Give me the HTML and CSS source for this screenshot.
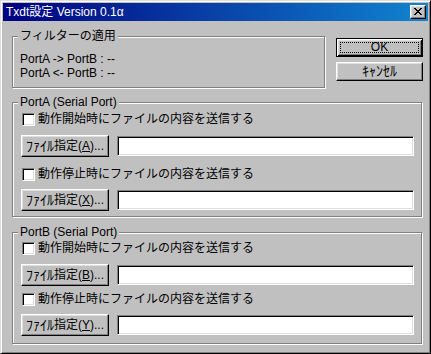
FILE: index.html
```html
<html>

<head>
    <meta charset="UTF-8" />
    <title>Txdt設定 Version 0.1α</title>
    <link rel="stylesheet" href="styles.css">
</head>

<body>
    <div class="window">
        <div class="titlebar">
            <span class="title">Txdt設定 Version 0.1α</span>
            <span class="close">
                <svg width="8" height="7" viewBox="0 0 8 7" shape-rendering="crispEdges">
                    <path fill="#000" d="M0 0h2v1H0zM6 0h2v1H6zM1 1h2v1H1zM5 1h2v1H5zM2 2h4v1H2zM3 3h2v1H3zM2 4h4v1H2zM1 5h2v1H1zM5 5h2v1H5zM0 6h2v1H0zM6 6h2v1H6z" />
                </svg>
            </span>
        </div>
        <div class="client">
            <div class="toprow">
                <div class="group filter">
                    <span class="legend">フィルターの適用</span>
                    <div class="status">
                        <div>PortA -&gt; PortB : --</div>
                        <div>PortA &lt;- PortB : --</div>
                    </div>
                </div>
                <div class="actions">
                    <div class="btn default"><span class="focus">OK</span></div>
                    <div class="btn"><span class="hw">ｷｬﾝｾﾙ</span></div>
                </div>
            </div>

            <!-- PortA -->
            <div class="group port porta">
                <span class="legend">PortA (Serial Port)</span>
                <div class="check first"><span class="box"></span>動作開始時にファイルの内容を送信する</div>
                <div class="filerow"><div class="btn file"><span class="hw">ﾌｧｲﾙ</span>指定(<u>A</u>)...</div><div class="edit"></div></div>
                <div class="check second"><span class="box"></span>動作停止時にファイルの内容を送信する</div>
                <div class="filerow"><div class="btn file"><span class="hw">ﾌｧｲﾙ</span>指定(<u>X</u>)...</div><div class="edit"></div></div>
            </div>

            <!-- PortB -->
            <div class="group port portb">
                <span class="legend">PortB (Serial Port)</span>
                <div class="check first"><span class="box"></span>動作開始時にファイルの内容を送信する</div>
                <div class="filerow"><div class="btn file"><span class="hw">ﾌｧｲﾙ</span>指定(<u>B</u>)...</div><div class="edit"></div></div>
                <div class="check second"><span class="box"></span>動作停止時にファイルの内容を送信する</div>
                <div class="filerow"><div class="btn file"><span class="hw">ﾌｧｲﾙ</span>指定(<u>Y</u>)...</div><div class="edit"></div></div>
            </div>
        </div>
    </div>
</body>

</html>
```

FILE: styles.css
```css
body {
    margin: 0;
    background-color: #c0c0c0;
    font-family: "Liberation Sans", "Noto Sans CJK JP", sans-serif;
    font-size: 12px;
    color: #000;
}

.window {
    width: 431px;
    height: 354px;
    box-sizing: border-box;
    padding: 2px;
    border: 1px solid;
    border-color: #dfdfdf #000 #000 #dfdfdf;
    box-shadow: inset 1px 1px #fff, inset -1px -1px #808080;
    background-color: #c0c0c0;
}

.titlebar {
    height: 18px;
    display: flex;
    align-items: center;
    padding: 0 2px 0 3px;
    background: linear-gradient(to right, #000080, #1084d0);
    color: #fff;
}

.title {
    line-height: 14px;
}

.close {
    margin-left: auto;
    width: 16px;
    height: 14px;
    box-sizing: border-box;
    padding: 2px 0 0 3px;
    border: 1px solid;
    border-color: #fff #000 #000 #fff;
    box-shadow: inset -1px -1px #808080, inset 1px 1px #dfdfdf;
    background-color: #c0c0c0;
}

.close svg {
    display: block;
}

.client {
    padding: 15px 0 0 9px;
}

.toprow {
    display: flex;
    align-items: flex-start;
}

/* etched group frame */
.group {
    box-sizing: border-box;
    border: 1px solid #808080;
    box-shadow: inset 1px 1px #fff, 1px 1px #fff;
}

.legend {
    display: table;
    margin: -7px 0 0 5px;
    padding: 0 2px;
    line-height: 12px;
    background-color: #c0c0c0;
}

.filter {
    width: 313px;
    height: 52px;
}

.status {
    margin: 10px 0 0 7px;
    line-height: 14px;
}

.actions {
    display: flex;
    flex-direction: column;
    gap: 5px;
    margin: 2px 0 0 11px;
}

.actions .btn {
    width: 87px;
    height: 19px;
}

.btn {
    box-sizing: border-box;
    display: flex;
    align-items: center;
    justify-content: center;
    border: 1px solid;
    border-color: #fff #000 #000 #fff;
    box-shadow: inset -1px -1px #808080, inset 1px 1px #dfdfdf;
    background-color: #c0c0c0;
    line-height: 13px;
    white-space: nowrap;
}

/* half-width katakana, drawn a bit larger like the bitmap font */
.hw {
    font-size: 14px;
    line-height: 13px;
}

.btn.default {
    border-color: #000;
    box-shadow: inset 1px 1px #fff, inset -1px -1px #000, inset 2px 2px #dfdfdf, inset -2px -2px #808080;
    padding: 3px;
    align-items: stretch;
}

.focus {
    flex: 1;
    display: flex;
    align-items: center;
    justify-content: center;
    border: 1px dotted #000;
}

.port {
    width: 410px;
    margin-top: 14px;
}

.porta {
    height: 115px;
}

.portb {
    height: 112px;
    margin-top: 15px;
}

.check {
    display: flex;
    align-items: center;
    gap: 3px;
    height: 13px;
    margin-left: 9px;
    line-height: 13px;
}

.box {
    width: 13px;
    height: 13px;
    box-sizing: border-box;
    border: 1px solid;
    border-color: #808080 #fff #fff #808080;
    box-shadow: inset 1px 1px #000, inset -1px -1px #dfdfdf;
    background-color: #fff;
}

.porta .first {
    margin-top: 5px;
}

.porta .second {
    margin-top: 11px;
}

.portb .first {
    margin-top: 4px;
}

.portb .second {
    margin-top: 7px;
}

.filerow {
    display: flex;
    align-items: center;
    gap: 8px;
    margin: 9px 0 0 8px;
}

.check.second + .filerow {
    margin-top: 8px;
}

.btn.file {
    width: 88px;
    height: 22px;
}

.edit {
    width: 297px;
    height: 20px;
    box-sizing: border-box;
    border: 1px solid;
    border-color: #808080 #fff #fff #808080;
    box-shadow: inset 1px 1px #000, inset -1px -1px #dfdfdf;
    background-color: #fff;
}
```
